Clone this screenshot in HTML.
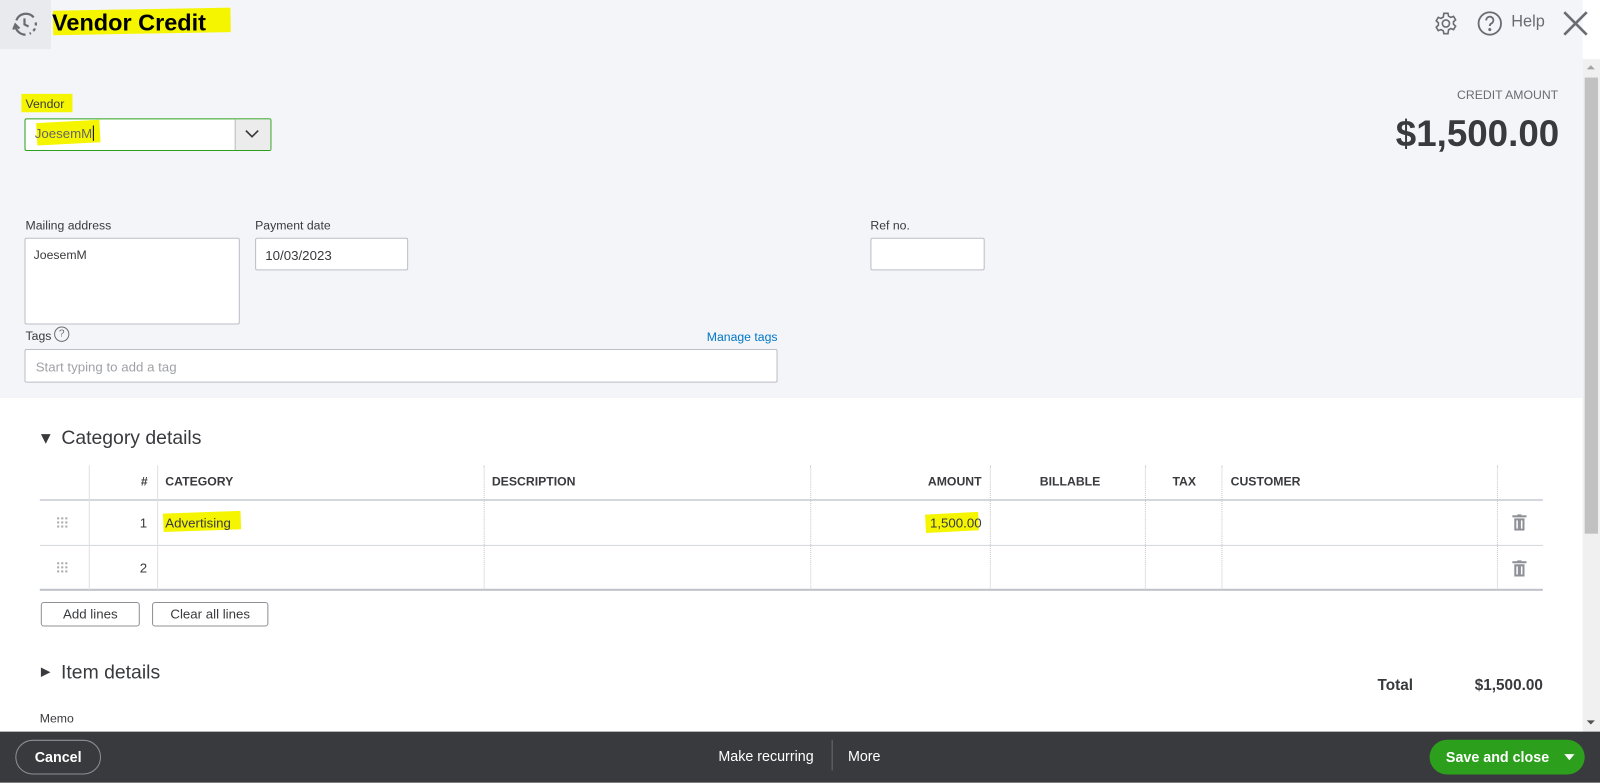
<!DOCTYPE html>
<html><head><style>
*{box-sizing:border-box;margin:0;padding:0}
body{width:1600px;height:781px;overflow:hidden;font-family:"Liberation Sans",Arial,sans-serif;color:#393a3d;background:#fff;position:relative}
#w{position:absolute;left:0;top:0;width:1568px;height:765px;transform:scale(1.020408);transform-origin:0 0}
.a{position:absolute}
.top{left:0;top:0;width:1551px;height:390px;background:#f4f5f8}
.lbl{font-size:12px;color:#393a3d}
.inp{background:#fff;border:1px solid #babec5;border-radius:2px;font-size:13px}
.hl{background:#f5f500}
.th{font-size:12px;font-weight:bold;top:465px}
.vl{width:0;border-left:1px dotted #c6c6c6}
.btn{border:1px solid #8d9096;border-radius:3px;font-size:13px;text-align:center;line-height:22px;background:#fff}
.dots{display:grid;grid-template-columns:repeat(3,2px);gap:2px}
.dots i{width:2px;height:2px;background:#aaa}
</style></head><body><div id="w">
<div class="a top"></div>
<div class="a" style="left:0;top:0;width:50px;height:48px;background:#e9eaee"></div>
<svg class="a" style="left:11px;top:10px" width="28" height="28" viewBox="0 0 28 28" fill="none" stroke="#6b6c72" stroke-width="2.2"><path d="M5 10 A10 10 0 0 1 22 7"/><path d="M24 12 A10 10 0 0 1 18 23" stroke-dasharray="3 3"/><path d="M14 24 A10 10 0 0 1 4 15"/><path d="M2 19 L4 14 L8 18"/><path d="M13 8 V14 L17 16"/></svg>
<div class="a hl" style="left:52px;top:9px;width:174px;height:24px;transform:rotate(-1deg)"></div>
<div class="a" style="left:51px;top:9px;font-size:23px;font-weight:bold;color:#000">Vendor Credit</div>
<svg class="a" style="left:1405px;top:11px" width="24" height="24" viewBox="0 0 24 24" fill="none" stroke="#6b6c72" stroke-width="1.6"><circle cx="12" cy="12" r="3.5"/><path d="M10 2h4l.6 2.8 2.2 1.2 2.7-1 2 3.4-2.1 1.9v2.4l2.1 1.9-2 3.4-2.7-1-2.2 1.2L14 22h-4l-.6-2.8-2.2-1.2-2.7 1-2-3.4 2.1-1.9v-2.4L2.5 9.4l2-3.4 2.7 1 2.2-1.2z"/></svg>
<svg class="a" style="left:1447px;top:10px" width="26" height="26" viewBox="0 0 26 26" fill="none" stroke="#6b6c72" stroke-width="1.8"><circle cx="13" cy="13" r="11"/><path d="M9.5 10a3.5 3.5 0 1 1 5 3c-1 .6-1.5 1.2-1.5 2.5"/><circle cx="13" cy="19" r=".6" fill="#6b6c72"/></svg>
<div class="a" style="left:1481px;top:13px;font-size:16px;color:#6b6c72">Help</div>
<svg class="a" style="left:1531px;top:10px" width="26" height="26" viewBox="0 0 26 26" stroke="#6b6c72" stroke-width="2.6"><path d="M2 2L24 24M24 2L2 24"/></svg>
<div class="a" style="left:1551px;top:58px;width:17px;height:659px;background:#f0f0f0"></div>
<div class="a" style="left:1553px;top:76px;width:13px;height:447px;background:#c1c1c1"></div>
<div class="a" style="left:1555px;top:64px;border:4px solid transparent;border-bottom-color:#a3a3a3;border-top:0"></div>
<div class="a" style="left:1555px;top:706px;border:4px solid transparent;border-top-color:#505050;border-bottom:0"></div>

<div class="a hl" style="left:21px;top:92px;width:50px;height:18px"></div>
<div class="a lbl" style="left:25px;top:95px">Vendor</div>
<div class="a" style="left:24px;top:116px;width:242px;height:32px;border:1px solid #2ca01c;background:#fff;border-radius:2px"></div>
<div class="a" style="left:230px;top:117px;width:35px;height:30px;background:#ececec;border-left:1px solid #babec5"></div>
<svg class="a" style="left:240px;top:126px" width="14" height="10" viewBox="0 0 14 10" fill="none" stroke="#393a3d" stroke-width="1.6"><path d="M1 2l6 6 6-6"/></svg>
<div class="a hl" style="left:36px;top:119px;width:62px;height:22px;transform:rotate(-3deg)"></div>
<div class="a" style="left:34px;top:123px;font-size:13px;color:#666">JoesemM<span style="border-left:1px solid #000;margin-left:1px"></span></div>
<div class="a" style="left:1300px;top:86px;width:227px;text-align:right;font-size:12px;color:#6b6c72">CREDIT AMOUNT</div>
<div class="a" style="left:1200px;top:110px;width:328px;text-align:right;font-size:36px;font-weight:bold;color:#393a3d">$1,500.00</div>

<div class="a lbl" style="left:25px;top:214px">Mailing address</div>
<div class="a inp" style="left:24px;top:233px;width:211px;height:85px;padding:8px"><span style="font-size:12px">JoesemM</span></div>
<div class="a lbl" style="left:250px;top:214px">Payment date</div>
<div class="a inp" style="left:250px;top:233px;width:150px;height:32px;padding:9px"><span>10/03/2023</span></div>
<div class="a lbl" style="left:853px;top:214px">Ref no.</div>
<div class="a inp" style="left:853px;top:233px;width:112px;height:32px"></div>
<div class="a lbl" style="left:25px;top:322px">Tags</div>
<div class="a" style="left:53px;top:320px;width:15px;height:15px;border:1px solid #6b6c72;border-radius:50%;font-size:10px;text-align:center;line-height:13px;color:#6b6c72">?</div>
<div class="a" style="left:600px;top:323px;width:162px;text-align:right;font-size:12px;color:#0077c5">Manage tags</div>
<div class="a inp" style="left:24px;top:342px;width:738px;height:33px;padding:9px 10px;color:#a0a2a6">Start typing to add a tag</div>

<div class="a" style="left:40px;top:418px;font-size:19px">▾&nbsp;&nbsp;Category details</div>
<div class="a" style="left:39px;top:489px;width:1473px;height:2px;background:#d4d7dc"></div>
<div class="a" style="left:39px;top:534px;width:1473px;height:1px;background:#d4d7dc"></div>
<div class="a" style="left:39px;top:577px;width:1473px;height:2px;background:#bfc3c9"></div>
<div class="a" style="left:87px;top:456px;height:122px;border-left:1px solid #e0e0e0"></div>
<div class="a" style="left:154px;top:456px;height:122px;border-left:1px solid #e0e0e0"></div>
<div class="a vl" style="left:474px;top:456px;height:122px"></div>
<div class="a vl" style="left:794px;top:456px;height:122px"></div>
<div class="a vl" style="left:970px;top:456px;height:122px"></div>
<div class="a vl" style="left:1122px;top:456px;height:122px"></div>
<div class="a vl" style="left:1197px;top:456px;height:122px"></div>
<div class="a vl" style="left:1467px;top:456px;height:122px"></div>
<div class="a th" style="left:138px">#</div>
<div class="a th" style="left:162px">CATEGORY</div>
<div class="a th" style="left:482px">DESCRIPTION</div>
<div class="a th" style="left:800px;width:162px;text-align:right">AMOUNT</div>
<div class="a th" style="left:1019px">BILLABLE</div>
<div class="a th" style="left:1149px">TAX</div>
<div class="a th" style="left:1206px">CUSTOMER</div>
<div class="a dots" style="left:56px;top:507px"><i></i><i></i><i></i><i></i><i></i><i></i><i></i><i></i><i></i></div>
<div class="a dots" style="left:56px;top:551px"><i></i><i></i><i></i><i></i><i></i><i></i><i></i><i></i><i></i></div>
<div class="a" style="left:137px;top:505px;font-size:13px">1</div>
<div class="a" style="left:137px;top:549px;font-size:13px">2</div>
<div class="a hl" style="left:160px;top:502px;width:76px;height:18px;transform:rotate(-2deg)"></div>
<div class="a" style="left:162px;top:505px;font-size:13px">Advertising</div>
<div class="a hl" style="left:907px;top:503px;width:52px;height:18px;transform:rotate(-3deg)"></div>
<div class="a" style="left:850px;top:505px;width:112px;text-align:right;font-size:13px">1,500.00</div>
<svg class="a" style="left:1482px;top:504px" width="14" height="16" viewBox="0 0 14 16" fill="#8d9096"><rect x="0" y="1" width="14" height="2"/><rect x="5" y="0" width="4" height="2"/><path d="M2 4h10v12H2zM4 6v8h1.5V6zM8.5 6v8H10V6z" fill-rule="evenodd"/></svg>
<svg class="a" style="left:1482px;top:549px" width="14" height="16" viewBox="0 0 14 16" fill="#8d9096"><rect x="0" y="1" width="14" height="2"/><rect x="5" y="0" width="4" height="2"/><path d="M2 4h10v12H2zM4 6v8h1.5V6zM8.5 6v8H10V6z" fill-rule="evenodd"/></svg>
<div class="a btn" style="left:40px;top:590px;width:97px;height:24px">Add lines</div>
<div class="a btn" style="left:149px;top:590px;width:114px;height:24px">Clear all lines</div>
<div class="a" style="left:40px;top:649px;font-size:19px"><span style="font-size:12px;vertical-align:3px">▶</span>&nbsp;&nbsp;Item details</div>
<div class="a" style="left:1350px;top:663px;font-size:15px;font-weight:bold">Total</div>
<div class="a" style="left:1400px;top:663px;width:112px;text-align:right;font-size:15px;font-weight:bold">$1,500.00</div>
<div class="a lbl" style="left:39px;top:697px">Memo</div>

<div class="a" style="left:0;top:717px;width:1568px;height:50px;background:#393a3d"></div>
<div class="a" style="left:15px;top:725px;width:84px;height:34px;border:1px solid #8d9096;border-radius:17px;color:#fff;font-size:14px;font-weight:bold;text-align:center;line-height:32px">Cancel</div>
<div class="a" style="left:704px;top:733px;color:#fff;font-size:14px">Make recurring</div>
<div class="a" style="left:815px;top:725px;width:1px;height:30px;background:#6b6c72"></div>
<div class="a" style="left:831px;top:733px;color:#fff;font-size:14px">More</div>
<div class="a" style="left:1401px;top:725px;width:152px;height:34px;background:#2ca01c;border-radius:17px"></div>
<div class="a" style="left:1417px;top:734px;color:#fff;font-size:14px;font-weight:bold">Save and close</div>
<div class="a" style="left:1533px;top:739px;border:5px solid transparent;border-top:6px solid #fff;border-bottom:0"></div>
</div></body></html>
